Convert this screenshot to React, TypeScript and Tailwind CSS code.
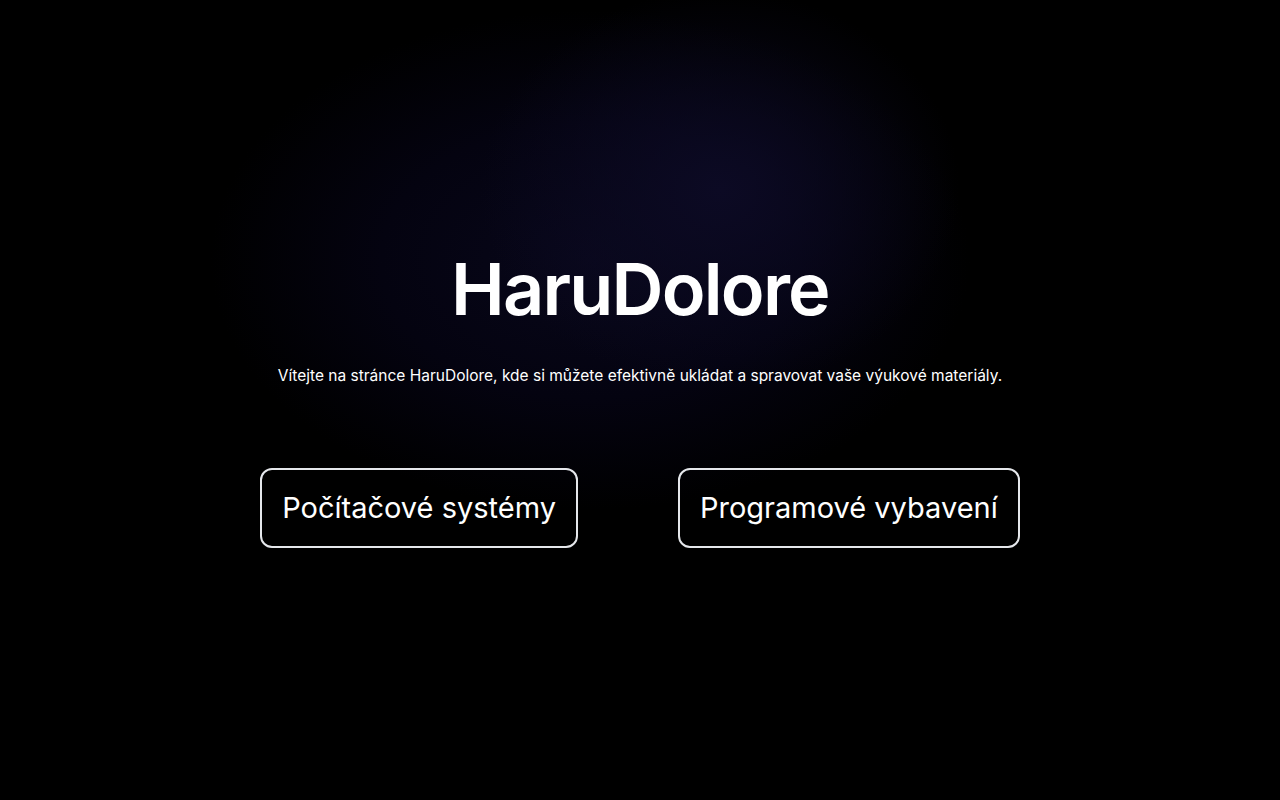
export default function App() {
  return (
    <main
      className="min-h-screen w-full bg-black bg-[radial-gradient(ellipse_240px_200px_at_720px_190px,#0c0a24_0%,rgba(12,10,36,0)_100%),radial-gradient(ellipse_380px_250px_at_590px_260px,#08071a_0%,#040310_55%,#000000_100%)] text-white flex flex-col items-center justify-center"
      style={{ fontFamily: "Inter, 'Noto Sans', sans-serif" }}
    >
      {/* Hero */}
      <h1 className="text-7xl font-semibold leading-none tracking-tight">HaruDolore</h1>
      <p className="mt-[39px] text-[15.5px] leading-6 text-white">
        Vítejte na stránce HaruDolore, kde si můžete efektivně ukládat a spravovat vaše výukové materiály.
      </p>

      {/* Sekce */}
      <div className="mt-20 flex items-center gap-[100px]">
        <button className="rounded-xl border-2 border-gray-200 px-5 py-5 text-[29px] leading-9 text-white">
          Počítačové systémy
        </button>
        <button className="rounded-xl border-2 border-gray-200 px-5 py-5 text-[29px] leading-9 text-white">
          Programové vybavení
        </button>
      </div>
    </main>
  )
}
